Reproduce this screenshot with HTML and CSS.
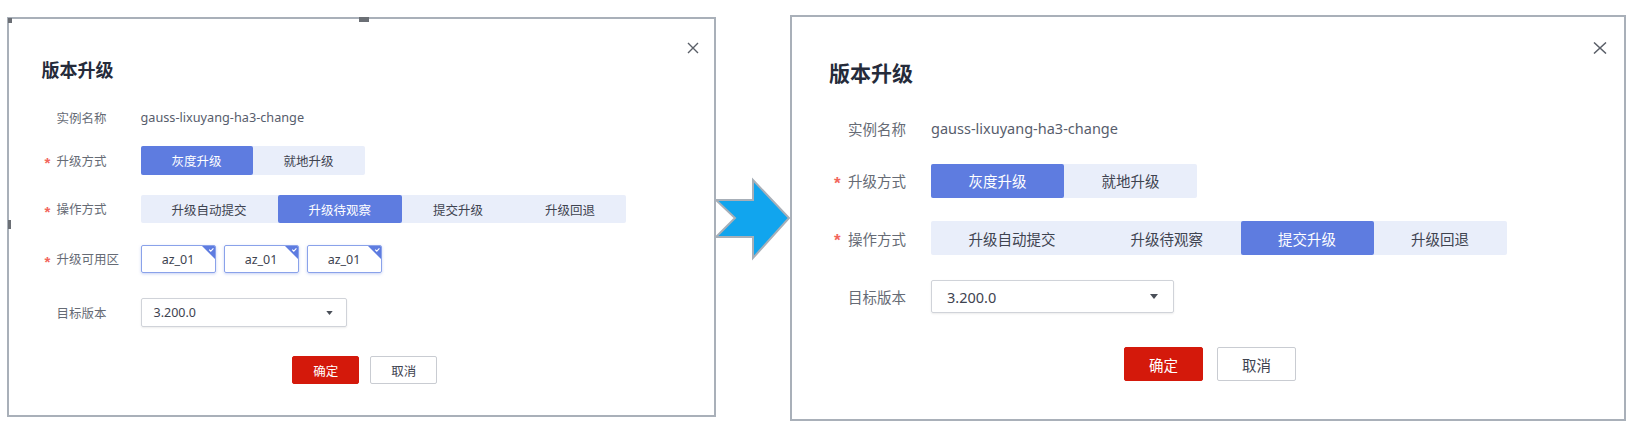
FILE: index.html
```html
<!DOCTYPE html>
<html lang="zh-CN">
<head>
  <meta charset="UTF-8">
  <meta name="viewport" content="width=device-width, initial-scale=1.0">
  <title>版本升级</title>
  <link rel="stylesheet" href="styles.css">
</head>
<body>
  <div class="stage">

    <!-- before: canary upgrade, waiting for observation -->
    <div class="dialog dialog-sm">
      <span class="handle handle-corner"></span>
      <span class="handle handle-top"></span>
      <span class="handle handle-side"></span>
      <button class="close" aria-label="关闭">
        <svg viewBox="0 0 12 12" width="12" height="12"><path d="M1 1L11 11M11 1L1 11" stroke="#5a5f68" stroke-width="1.4" fill="none"/></svg>
      </button>
      <h3 class="dialog-title">版本升级</h3>
      <div class="form-row row-name">
        <span class="label">实例名称</span>
        <span class="value">gauss-lixuyang-ha3-change</span>
      </div>
      <div class="form-row row-mode">
        <span class="label required">升级方式</span>
        <div class="segmented">
          <span class="seg active">灰度升级</span>
          <span class="seg">就地升级</span>
        </div>
      </div>
      <div class="form-row row-op">
        <span class="label required">操作方式</span>
        <div class="segmented">
          <span class="seg">升级自动提交</span>
          <span class="seg active">升级待观察</span>
          <span class="seg">提交升级</span>
          <span class="seg">升级回退</span>
        </div>
      </div>
      <div class="form-row row-az">
        <span class="label required">升级可用区</span>
        <div class="az-list">
          <span class="az-card">az_01<svg class="corner" viewBox="0 0 13 13" width="13" height="13"><polygon points="0,0 13,0 13,13" fill="#5e7ce0"/><path d="M7.2 3.6L8.8 5.2L11.4 2.4" stroke="#fff" stroke-width="1.1" fill="none"/></svg></span>
          <span class="az-card">az_01<svg class="corner" viewBox="0 0 13 13" width="13" height="13"><polygon points="0,0 13,0 13,13" fill="#5e7ce0"/><path d="M7.2 3.6L8.8 5.2L11.4 2.4" stroke="#fff" stroke-width="1.1" fill="none"/></svg></span>
          <span class="az-card">az_01<svg class="corner" viewBox="0 0 13 13" width="13" height="13"><polygon points="0,0 13,0 13,13" fill="#5e7ce0"/><path d="M7.2 3.6L8.8 5.2L11.4 2.4" stroke="#fff" stroke-width="1.1" fill="none"/></svg></span>
        </div>
      </div>
      <div class="form-row row-version">
        <span class="label">目标版本</span>
        <div class="select">
          <span>3.200.0</span>
          <svg viewBox="0 0 8 5" width="7" height="4"><polygon points="0,0 8,0 4,5" fill="#4a4f58"/></svg>
        </div>
      </div>
      <div class="actions">
        <button class="btn btn-primary">确定</button>
        <button class="btn">取消</button>
      </div>
    </div>

    <svg class="arrow" viewBox="0 0 74 82" width="74" height="82">
      <polygon points="0,22 37,22 37,2 73,40 37,80 37,59 0,59 19,40" fill="#11a5ee" stroke="#a7afb8" stroke-width="2" stroke-linejoin="miter"/>
    </svg>

    <!-- after: commit upgrade -->
    <div class="dialog dialog-lg">
      <button class="close" aria-label="关闭">
        <svg viewBox="0 0 14 12" width="14" height="12"><path d="M1 0.5L13 11.5M13 0.5L1 11.5" stroke="#5a5f68" stroke-width="1.5" fill="none"/></svg>
      </button>
      <h3 class="dialog-title">版本升级</h3>
      <div class="form-row row-name">
        <span class="label">实例名称</span>
        <span class="value">gauss-lixuyang-ha3-change</span>
      </div>
      <div class="form-row row-mode">
        <span class="label required">升级方式</span>
        <div class="segmented">
          <span class="seg active">灰度升级</span>
          <span class="seg">就地升级</span>
        </div>
      </div>
      <div class="form-row row-op">
        <span class="label required">操作方式</span>
        <div class="segmented">
          <span class="seg">升级自动提交</span>
          <span class="seg">升级待观察</span>
          <span class="seg active">提交升级</span>
          <span class="seg">升级回退</span>
        </div>
      </div>
      <div class="form-row row-version">
        <span class="label">目标版本</span>
        <div class="select">
          <span>3.200.0</span>
          <svg viewBox="0 0 8 5" width="8" height="5"><polygon points="0,0 8,0 4,5" fill="#4a4f58"/></svg>
        </div>
      </div>
      <div class="actions">
        <button class="btn btn-primary">确定</button>
        <button class="btn">取消</button>
      </div>
    </div>

  </div>
</body>
</html>
```

FILE: styles.css
```css
body {
  margin: 0;
  background: #fff;
  font-family: "Noto Sans", "Noto Sans CJK SC", sans-serif;
  color: #333;
}
.stage {
  display: flex;
  align-items: flex-start;
  padding: 15px 0 0 7px;
}

/* dialog frame */
.dialog {
  position: relative;
  box-sizing: border-box;
  flex-shrink: 0;
  border: 2px solid #a9b0b9;
  background: #fff;
}
.dialog-title {
  margin: 0;
  color: #252b3a;
  font-weight: 700;
}
.close {
  position: absolute;
  padding: 0;
  border: none;
  background: none;
  line-height: 0;
}
.form-row {
  display: flex;
  align-items: center;
}
.label {
  display: flex;
  align-items: center;
  box-sizing: border-box;
  flex-shrink: 0;
  color: #666b75;
  white-space: nowrap;
}
.label.required::before {
  content: "*";
  color: #f2665c;
  font-family: "Liberation Sans", sans-serif;
  font-weight: 700;
  line-height: 1;
  padding-top: 0.32em;
}
.value {
  color: #575d6c;
}
.segmented {
  display: flex;
  background: #e9eefa;
  border-radius: 2px;
}
.seg {
  display: flex;
  align-items: center;
  color: #3e4350;
  white-space: nowrap;
}
.seg.active {
  background: #5e7ce0;
  color: #fff;
  border-radius: 2px;
}
.az-list {
  display: flex;
  gap: 8px;
}
.az-card {
  position: relative;
  display: flex;
  align-items: center;
  justify-content: center;
  box-sizing: border-box;
  width: 75px;
  height: 28px;
  border: 1px solid #8aa2ea;
  border-radius: 2px;
  box-shadow: 0 1px 3px rgba(94, 124, 224, 0.35);
  color: #3e4350;
  overflow: hidden;
}
.corner {
  position: absolute;
  top: 0;
  right: 0;
}
.select {
  display: flex;
  align-items: center;
  justify-content: space-between;
  box-sizing: border-box;
  border: 1px solid #d0d3d9;
  border-radius: 2px;
  box-shadow: 0 1px 2px rgba(0, 0, 0, 0.08);
  color: #3e4350;
}
.actions {
  display: flex;
  justify-content: center;
}
.btn {
  box-sizing: border-box;
  border: 1px solid #c9ccd2;
  border-radius: 2px;
  background: #fff;
  color: #3e4350;
  font-family: inherit;
  padding: 0;
}
.btn-primary {
  border-color: #d4190b;
  background: #d4190b;
  color: #fff;
}

/* selection handles on the left frame */
.handle {
  position: absolute;
  background: #6b6f75;
}
.handle-corner {
  top: -1px;
  left: -1px;
  width: 4px;
  height: 5px;
}
.handle-top {
  top: -2px;
  left: 350px;
  width: 10px;
  height: 5px;
}
.handle-side {
  top: 201px;
  left: -1px;
  width: 3px;
  height: 9px;
}

/* left dialog: smaller capture */
.dialog-sm {
  width: 709px;
  height: 400px;
  margin-top: 2px;
  padding: 39px 0 0 32.5px;
  font-size: 12.5px;
}
.dialog-sm .close {
  top: 23px;
  right: 15px;
}
.dialog-sm .dialog-title {
  font-size: 18px;
  line-height: 24px;
}
.dialog-sm .label {
  width: 99px;
  padding-left: 15px;
}
.dialog-sm .label.required {
  padding-left: 3px;
}
.dialog-sm .label.required::before {
  width: 12px;
  font-size: 15px;
}
.dialog-sm .value {
  font-size: 12.7px;
}
.dialog-sm .row-name { height: 20px; margin-top: 25px; }
.dialog-sm .row-mode { height: 29px; margin-top: 19px; }
.dialog-sm .row-op { height: 28px; margin-top: 20px; }
.dialog-sm .row-az { height: 28px; margin-top: 22px; }
.dialog-sm .row-version { height: 29px; margin-top: 25px; }
.dialog-sm .seg {
  height: 29px;
  padding: 0 31px;
}
.dialog-sm .row-op .seg {
  height: 28px;
}
.dialog-sm .select {
  width: 206px;
  height: 29px;
  padding: 0 13px 0 12px;
}
.dialog-sm .actions {
  margin-top: 29px;
  padding-right: 26px;
  gap: 11px;
}
.dialog-sm .btn {
  width: 67px;
  height: 28px;
  font-size: 12.5px;
}

/* right dialog: larger capture */
.dialog-lg {
  width: 836px;
  height: 406px;
  padding: 42px 0 0 37px;
  font-size: 14.5px;
}
.dialog-lg .close {
  top: 25px;
  right: 17px;
}
.dialog-lg .dialog-title {
  font-size: 21px;
  line-height: 28px;
}
.dialog-lg .label {
  width: 102px;
  padding-left: 19px;
}
.dialog-lg .label.required {
  padding-left: 5px;
}
.dialog-lg .label.required::before {
  width: 14px;
  font-size: 17px;
}
.dialog-lg .row-name { height: 22px; margin-top: 30px; }
.dialog-lg .row-mode { height: 34px; margin-top: 24.5px; }
.dialog-lg .row-op { height: 34px; margin-top: 23.5px; }
.dialog-lg .row-version { height: 33px; margin-top: 25px; }
.dialog-lg .seg {
  height: 34px;
  padding: 0 37.5px;
}
.dialog-lg .select {
  width: 243px;
  height: 33px;
  padding: 0 15px 0 15px;
}
.dialog-lg .actions {
  margin-top: 34px;
  padding-right: 33px;
  gap: 14px;
}
.dialog-lg .btn {
  width: 79px;
  height: 34px;
  font-size: 14.5px;
}

.arrow {
  display: block;
  flex-shrink: 0;
  margin-top: 163px;
  overflow: visible;
}
```
